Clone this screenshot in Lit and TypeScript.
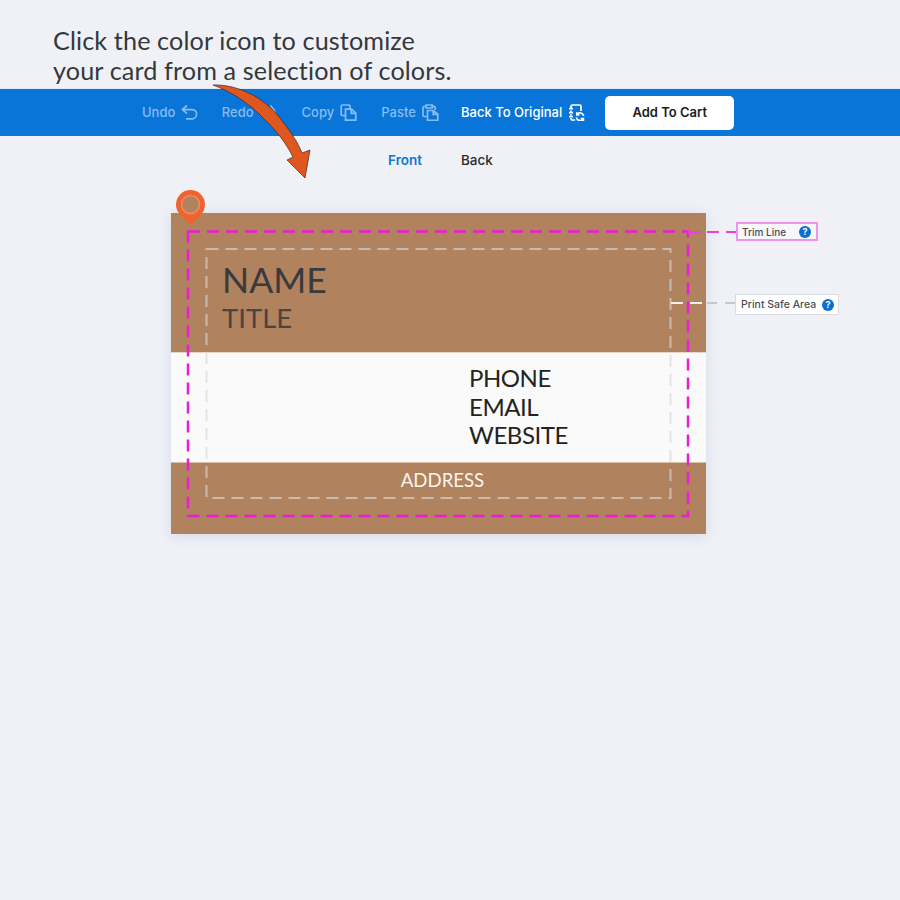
import { LitElement, html, css, svg } from "lit";
import { customElement } from "lit/decorators.js";

const icons = {
  undo: svg`<path d="M6 1.5 1.4 5.6 6 9.6M1.8 5.6h9.2a4.6 4.6 0 0 1 0 9.2H5"/>`,
  redo: svg`<path d="M6 4a6.2 6.2 0 1 0 8 2M10.5 1.5l3.5 4.2-4.4 2.4"/>`,
  copy: svg`<path d="M5 11.5H2.4a1.2 1.2 0 0 1-1.2-1.2V2.2A1.2 1.2 0 0 1 2.4 1h6.4A1.2 1.2 0 0 1 10 2.2V5"/><path d="M5.5 5.2h6l4.3 4v6.9H5.5zM11.2 5.4v4h4.4"/>`,
  paste: svg`<path d="M5 12.5H2.2A1.2 1.2 0 0 1 1 11.3V3.6a1.2 1.2 0 0 1 1.2-1.2h1.6M10.6 2.4h1.4a1.2 1.2 0 0 1 1.2 1.2V6"/><path d="M4.2 1h6v3h-6zM5.5 6.5h6l4.3 3.6v6.2H5.5zM11.2 6.7v3.6h4.4"/>`,
  back: svg`<path d="M3 4V2.4A1.4 1.4 0 0 1 4.4 1h7.2A1.4 1.4 0 0 1 13 2.4V7M3 6.4v1.4M3 10.2v1.4M3 14v.6A1.4 1.4 0 0 0 4.4 16h2.8M1 4.6h4M1 8.6h4M1 12.6h4"/><path d="M15.6 12a3.6 3.6 0 0 0-6.5-1.6M8.4 13.4a3.6 3.6 0 0 0 6.5 1.6M8.8 8.2v2.6h2.6M15.4 17v-2.5h-2.6"/>`,
};

const tools = [
  { label: "Undo", icon: icons.undo, dim: true },
  { label: "Redo", icon: icons.redo, dim: true },
  { label: "Copy", icon: icons.copy, dim: true },
  { label: "Paste", icon: icons.paste, dim: true },
  { label: "Back To Original", icon: icons.back, dim: false },
];

@customElement("app-root")
export class AppRoot extends LitElement {
  static styles = css`
    :host {
      display: block;
      position: relative;
      width: 900px;
      height: 900px;
      overflow: hidden;
      background: #eff1f7;
      font-family: "Inter", "Liberation Sans", sans-serif;
    }
    .caption {
      height: 63px;
      padding: 26px 0 0 53px;
      box-sizing: content-box;
      font: 400 25.2px/29.5px "Lato", "Open Sans", sans-serif;
      letter-spacing: 0.12px;
      color: #33383d;
    }
    .toolbar {
      height: 47px;
      border-top: 1px solid #dbe9f6;
      margin-top: -1px;
      background: #0a75d8;
      display: flex;
      align-items: center;
      padding-left: 142px;
    }
    .tool {
      display: flex;
      align-items: center;
      font-size: 13px;
      font-weight: 500;
      letter-spacing: 0;
      color: #fff;
      margin-right: 21px;
      padding-bottom: 1px;
    }
    .tool.dim {
      color: #86bcf0;
      width: 79.75px;
      margin-right: 0;
    }
    .tool svg {
      width: 17px;
      height: 17px;
      margin-left: 6px;
      fill: none;
      stroke: currentColor;
      stroke-width: 1.7;
    }
    .cart {
      margin-left: -1px;
      width: 129px;
      height: 34px;
      border-radius: 5px;
      background: #fff;
      color: #1b1b1b;
      font-size: 13px;
      font-weight: 600;
      display: flex;
      align-items: center;
      justify-content: center;
      padding-bottom: 1px;
      box-sizing: border-box;
    }
    .tabs {
      display: flex;
      height: 48px;
      align-items: center;
      padding-left: 388px;
      gap: 39px;
      font-size: 13.5px;
      font-weight: 500;
      color: #2c2c2c;
    }
    .tabs .on { color: #0f76d4; font-weight: 600; }
    .stage {
      position: relative;
      margin: 29px 0 0 171px;
      width: 535px;
      height: 321px;
    }
    .card {
      width: 535px;
      height: 321px;
      display: flex;
      flex-direction: column;
      box-shadow: 0 2px 12px rgba(120, 130, 160, 0.22);
      font-family: "Lato", "Open Sans", sans-serif;
    }
    .top {
      height: 139px;
      background: #b0825e;
      padding: 47px 0 0 51px;
      box-sizing: border-box;
      color: #3a3a3c;
    }
    .name { font-size: 35.6px; line-height: 39px; }
    .title { font-size: 27.5px; line-height: 36px; margin-top: 1px; color: #4a4440; }
    .mid {
      height: 111px;
      background: #fafafa;
      padding: 11px 0 0 298px;
      box-sizing: border-box;
      font-size: 24px;
      letter-spacing: -0.45px;
      line-height: 28.5px;
      color: #232323;
      border-top: 1px solid #e6d5c6;
      border-bottom: 1px solid #d9bfa8;
    }
    .bottom {
      flex: 1;
      background: #b0825e;
      color: #fcf5ec;
      font-size: 18.6px;
      display: flex;
      justify-content: center;
      padding: 6px 0 0 8px;
      box-sizing: border-box;
    }
    .guides {
      position: absolute;
      left: 0;
      top: 0;
      overflow: visible;
      pointer-events: none;
    }
    .callout {
      position: absolute;
      display: flex;
      align-items: center;
      justify-content: space-between;
      box-sizing: border-box;
      font-size: 10px;
      font-weight: 500;
      color: #4a4e55;
      background: #f6f6fb;
    }
    .trim {
      left: 565px;
      top: 9px;
      width: 82px;
      height: 19px;
      padding: 0 5px 0 4px;
      border: 2px solid #f291ea;
    }
    .safe {
      left: 564px;
      top: 81px;
      width: 104px;
      height: 21px;
      padding: 0 4px 0 5px;
      border: 1px solid #d9dce4;
      background: #fff;
      font-size: 10.5px;
    }
    .help {
      width: 12px;
      height: 12px;
      border-radius: 50%;
      background: #0a6fd0;
      color: #fff;
      font-size: 9px;
      font-weight: 700;
      display: flex;
      align-items: center;
      justify-content: center;
    }
    .overlay {
      position: absolute;
      left: 0;
      top: 0;
      pointer-events: none;
    }
  `;

  render() {
    return html`
      <div class="caption">Click the color icon to customize<br />your card from a selection of colors.</div>
      <div class="toolbar">
        ${tools.map(
          (t) => html`<div class="tool ${t.dim ? "dim" : ""}">
            ${t.label}<svg viewBox="0 0 17 17">${t.icon}</svg>
          </div>`
        )}
        <div class="cart">Add To Cart</div>
      </div>
      <div class="tabs"><span class="on">Front</span><span>Back</span></div>
      <div class="stage">
        <div class="card">
          <div class="top">
            <div class="name">NAME</div>
            <div class="title">TITLE</div>
          </div>
          <div class="mid">PHONE<br />EMAIL<br />WEBSITE</div>
          <div class="bottom">ADDRESS</div>
        </div>
        <svg class="guides" width="535" height="321" viewBox="0 0 535 321" fill="none">
          <rect x="35.5" y="36" width="464" height="249" stroke="#d8d8d8" stroke-opacity="0.65" stroke-width="2" stroke-dasharray="12 7" />
          <path d="M500 90h64" stroke="#f4f0ec" stroke-width="2" stroke-dasharray="12 7" />
          <path d="M536 90h28" stroke="#c4c7cf" stroke-width="2" stroke-dasharray="10 8" />
          <rect x="17" y="18.5" width="500" height="284.5" stroke="#ec1dd4" stroke-width="2.5" stroke-dasharray="12 7" />
          <path d="M517 19h48" stroke="#ee3ddb" stroke-width="2" stroke-dasharray="12 7" />
          <path d="M19.5 12 9 1.5A14.5 14.5 0 1 1 30 1.5Z" fill="#ee6430" />
          <circle cx="19.5" cy="-8.5" r="9" fill="#b0825e" stroke="#f08a5f" stroke-width="1.5" />
        </svg>
        <div class="callout trim">Trim Line<span class="help">?</span></div>
        <div class="callout safe">Print Safe Area<span class="help">?</span></div>
      </div>
      <svg class="overlay" width="900" height="900" viewBox="0 0 900 900">
        <path
          d="M213 85C240 84 268 100 283 122C293 135 298 143 302 153L310 150L305 178L287 160L293 157C286 143 276 130 263 118C250 104 232 92 213 85Z"
          fill="#e0561f"
          stroke="#3c2a22"
          stroke-width="0.7"
          stroke-linejoin="round"
        />
      </svg>
    `;
  }
}
